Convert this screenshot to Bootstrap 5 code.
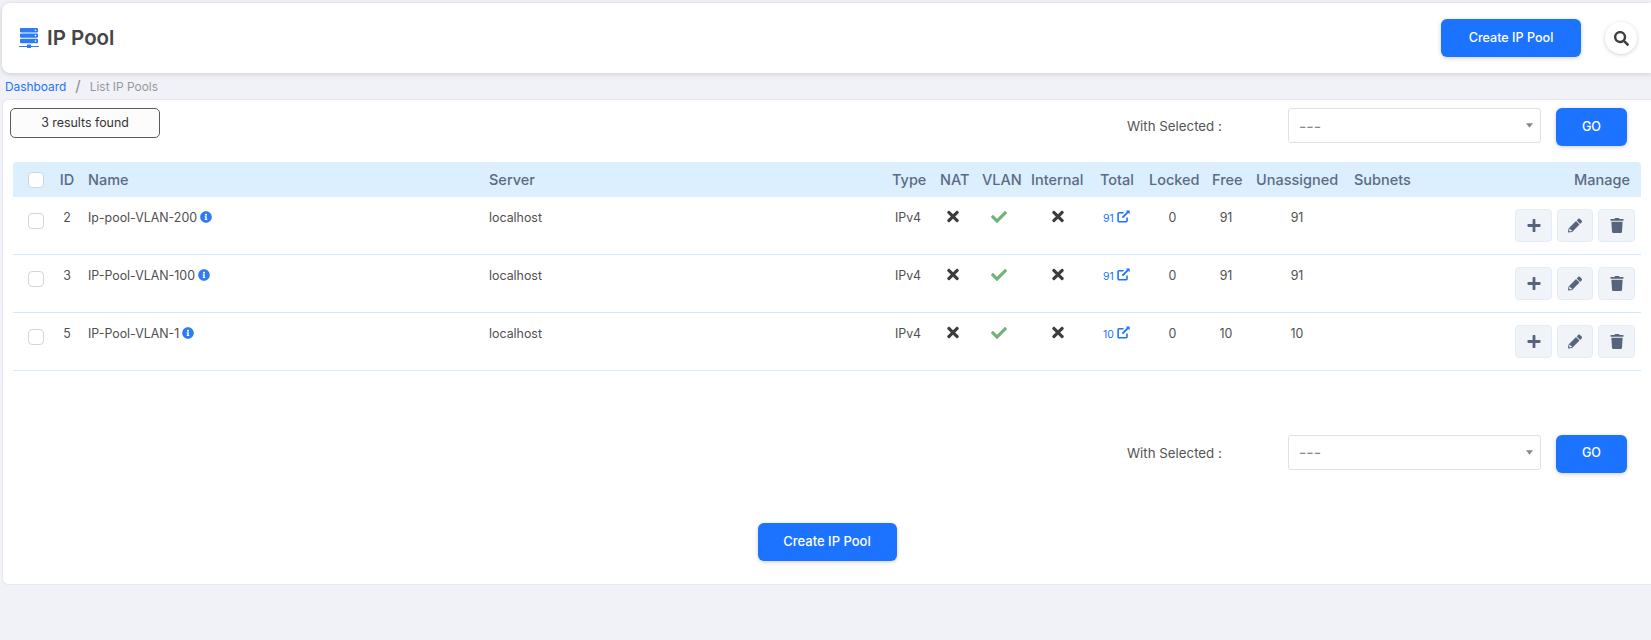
<!DOCTYPE html>
<html lang="en">
<head>
    <meta charset="UTF-8">
    <meta name="viewport" content="width=device-width, initial-scale=1.0">
    <title>IP Pool</title>
    <link href="https://cdn.jsdelivr.net/npm/bootstrap@5.3.3/dist/css/bootstrap.min.css" rel="stylesheet">
    <style>
        body { background: #f0f2f7; font-family: Inter, "Liberation Sans", sans-serif; font-size: 13px; color: #505050; padding: 3px 0 0 2px; overflow-x: hidden; }
        .page-head { height: 70px; background: #fff; border-radius: 8px 0 0 8px; box-shadow: 0 1px 5px rgba(0,0,0,.16); padding: 0 14px 0 17px; }
        .page-head h1 { font-size: 20.5px; font-weight: 600; color: #454545; margin: 0 0 0 8px; }
        .head-icon { width: 20px; height: 20px; }
        .btn-pool { background: #1c73ff; border: 0; color: #fff; border-radius: 6px; font-size: 12.6px; font-weight: 500; height: 38px; box-shadow: 0 1px 4px rgba(0,0,0,.2); display: flex; align-items: center; justify-content: center; padding: 0; }
        .btn-pool:hover { background: #1c73ff; color: #fff; }
        .btn-create { width: 140px; }
        .btn-go { width: 71px; }
        .search-btn { width: 32px; height: 32px; border-radius: 50%; background: #fff; border: 0; box-shadow: 0 1px 4px rgba(0,0,0,.18); margin-left: 24px; padding: 0; display: flex; align-items: center; justify-content: center; }
        .search-btn svg { width: 15px; height: 15px; fill: #3f3f3f; }
        .crumbs { height: 26px; margin: 0 0 0 3px; padding-top: 2px; font-size: 11.9px; align-items: center; --bs-breadcrumb-divider-color: #888; --bs-breadcrumb-item-padding-x: 9px; }
        .crumbs a { color: #1c73ff; text-decoration: none; }
        .crumbs .active { color: #999; }
        .crumbs .breadcrumb-item + .breadcrumb-item::before { font-size: 15px; line-height: 1; }
        .main-card { background: #fff; border: 1px solid #e6e8ee; border-right: 0; border-radius: 6px 0 0 6px; height: 486px; padding: 8px 9px 0 7px; }
        .count-box { width: 150px; height: 30px; border: 1px solid #5a5a5a; border-radius: 5px; background: #fcfcfc; color: #333; font-size: 12.4px; }
        .sel-label { width: 161px; color: #555; font-size: 13.3px; }
        .sel-box { width: 253px; height: 35px; margin-right: 15px; border: 1px solid #dfe1e6; border-radius: 3px; font-size: 16px; color: #888; padding: 0 24px 0 10px; font-family: inherit; background-size: 7px 5px; background-position: right 7px center; background-repeat: no-repeat; background-image: url("data:image/svg+xml,%3Csvg xmlns='http://www.w3.org/2000/svg' viewBox='0 0 9 6'%3E%3Cpath fill='%23888' d='M0 0h9L4.5 6z'/%3E%3C/svg%3E"); }
        .tool-row { margin-right: 15px; }
        .pool-table { table-layout: fixed; width: 1628px; margin: 16px 0 0 3px; font-size: 12.4px; color: #505050; }
        .pool-table thead th { background: #dcefff; color: #5b6b82; font-weight: 500; font-size: 14.5px; height: 35px; padding: 0 8px; vertical-align: middle; border: 0; white-space: nowrap; }
        .pool-table thead th:first-child { border-radius: 4px 0 0 0; }
        .pool-table thead th:last-child { border-radius: 0 4px 0 0; }
        .pool-table tbody td { height: 58px; padding: 12px 8px 0; vertical-align: top; border-bottom: 1px solid #d0e9ff; color: #505050; white-space: nowrap; background: transparent; }
        .pool-table tbody tr:first-child td { height: 57px; }
        .cw-check { width: 39px; } .cw-id { width: 28px; } .cw-name { width: 401px; } .cw-server { width: 403px; }
        .cw-type { width: 48px; } .cw-nat { width: 42px; } .cw-vlan { width: 49px; } .cw-int { width: 69px; }
        .cw-total { width: 49px; } .cw-lock { width: 63px; } .cw-free { width: 44px; } .cw-unas { width: 98px; }
        .cw-sub { width: 73px; } .cw-manage { width: 222px; }
        .pool-table .form-check-input { width: 16px; height: 16px; margin: 0 0 0 7px; border: 1px solid #d4d4d4; border-radius: 4px; float: none; display: block; }
        .pool-table td .form-check-input { margin-top: 4px; }
        .pool-table .id-cell { padding-left: 2px; padding-right: 0; text-align: center; }
        .pool-table thead .manage-head { padding-right: 11px; }
        .pool-table tbody .act-cell { padding: 12px 6px 0 0; }
        .info-ico { width: 12px; height: 12px; fill: #2f7bf0; margin-left: 3px; vertical-align: -1px; }
        .x-ico { width: 12px; height: 17px; fill: #3c3c3c; display: block; margin: -1px auto 0; }
        .ok-ico { width: 16px; height: 16px; fill: #74b27b; display: block; margin: 0 auto; }
        .total-link { color: #1c73ff; text-decoration: none; font-size: 10.5px; }
        .ext-ico { width: 13px; height: 13px; margin-left: 3px; vertical-align: -1px; fill: none; stroke: #1c73ff; stroke-width: 1.7; }
        .act-btn { height: 33px; background: #f0f4f9; border: 1px solid #e3edf8; border-radius: 4px; padding: 0; display: flex; align-items: center; justify-content: center; }
        .act-add { width: 37px; } .act-edit { width: 36px; } .act-del { width: 37px; }
        .act-btn svg { width: 14px; height: 15px; fill: #56657c; }
        .act-gap { gap: 5px; }
        .bulk-low { margin-top: 64px; }
        .bottom-btn { margin: 50px 0 0 2px; width: 139px; font-size: 13px; }
    </style>
</head>
<body>

<svg width="0" height="0" class="position-absolute">
    <symbol id="i-x" viewBox="0 0 352 512"><path d="M242.72 256l100.07-100.07c12.28-12.28 12.28-32.19 0-44.48l-22.24-22.24c-12.28-12.28-32.19-12.28-44.48 0L176 189.28 75.93 89.21c-12.28-12.28-32.19-12.28-44.48 0L9.21 111.45c-12.28 12.28-12.28 32.19 0 44.48L109.28 256 9.21 356.07c-12.28 12.28-12.28 32.19 0 44.48l22.24 22.24c12.28 12.28 32.2 12.28 44.48 0L176 322.72l100.07 100.07c12.28 12.28 32.2 12.28 44.48 0l22.24-22.24c12.28-12.28 12.28-32.19 0-44.48L242.72 256z"/></symbol>
    <symbol id="i-ok" viewBox="0 0 512 512"><path d="M173.898 439.404l-166.4-166.4c-9.997-9.997-9.997-26.206 0-36.204l36.203-36.204c9.997-9.998 26.207-9.998 36.204 0L192 312.69 432.095 72.596c9.997-9.997 26.207-9.997 36.204 0l36.203 36.204c9.997 9.997 9.997 26.206 0 36.204l-294.4 294.401c-9.998 9.997-26.207 9.997-36.204-.001z"/></symbol>
    <symbol id="i-info" viewBox="0 0 512 512"><path d="M256 8C119 8 8 119.083 8 256c0 136.997 111 248 248 248s248-111.003 248-248C504 119.083 393 8 256 8zm0 110c23.196 0 42 18.804 42 42s-18.804 42-42 42-42-18.804-42-42 18.804-42 42-42zm56 254c0 6.627-5.373 12-12 12h-88c-6.627 0-12-5.373-12-12v-24c0-6.627 5.373-12 12-12h12v-64h-12c-6.627 0-12-5.373-12-12v-24c0-6.627 5.373-12 12-12h64c6.627 0 12 5.373 12 12v100h12c6.627 0 12 5.373 12 12v24z"/></symbol>
    <symbol id="i-ext" viewBox="0 0 14 14"><path d="M10.8 8v3.6a1 1 0 0 1-1 1H2.2a1 1 0 0 1-1-1V4a1 1 0 0 1 1-1H7"/><path d="M5.8 8.2L12 2" stroke-width="2"/><path d="M9.5 .5H13.6V4.6z" fill="#1c73ff" stroke="none"/></symbol>
    <symbol id="i-plus" viewBox="0 0 448 512"><path d="M416 208H272V64c0-17.67-14.33-32-32-32h-32c-17.67 0-32 14.33-32 32v144H32c-17.67 0-32 14.33-32 32v32c0 17.67 14.33 32 32 32h144v144c0 17.67 14.33 32 32 32h32c17.67 0 32-14.33 32-32V304h144c17.67 0 32-14.33 32-32v-32c0-17.67-14.33-32-32-32z"/></symbol>
    <symbol id="i-pen" viewBox="0 0 512 512"><path d="M497.9 142.1l-46.1 46.1c-4.7 4.7-12.3 4.7-17 0l-111-111c-4.7-4.7-4.7-12.3 0-17l46.1-46.1c18.7-18.7 49.1-18.7 67.9 0l60.1 60.1c18.8 18.7 18.8 49.1 0 67.9zM284.2 99.8L21.6 362.4.4 483.9c-2.9 16.4 11.4 30.6 27.8 27.8l121.5-21.3 262.6-262.6c4.7-4.7 4.7-12.3 0-17l-111-111c-4.8-4.7-12.4-4.7-17.1 0zM88 424h48v36.3l-64.5 11.3-31.1-31.1L51.7 376H88v48z"/></symbol>
    <symbol id="i-trash" viewBox="0 0 448 512"><path d="M432 32H312l-9.4-18.7A24 24 0 0 0 281.1 0H166.8a23.72 23.72 0 0 0-21.4 13.3L136 32H16A16 16 0 0 0 0 48v32a16 16 0 0 0 16 16h416a16 16 0 0 0 16-16V48a16 16 0 0 0-16-16zM53.2 467a48 48 0 0 0 47.9 45h245.8a48 48 0 0 0 47.9-45L416 128H32z"/></symbol>
</svg>

<!-- Page header -->
<div class="page-head d-flex align-items-center">
    <svg class="head-icon" viewBox="0 0 20 20">
        <g fill="#2f7bf0">
            <rect x="1" y="0" width="18" height="4.4" rx="1"/>
            <rect x="1" y="5.4" width="18" height="4.4" rx="1"/>
            <rect x="1" y="10.8" width="18" height="4.4" rx="1"/>
            <rect x="0" y="18" width="20" height="1"/>
            <rect x="8" y="16.5" width="4" height="3.5" rx=".5"/>
        </g>
        <g fill="#fff">
            <circle cx="16.5" cy="2.2" r=".8"/>
            <circle cx="16.5" cy="7.6" r=".8"/>
            <circle cx="16.5" cy="13" r=".8"/>
        </g>
    </svg>
    <h1>IP Pool</h1>
    <a href="#" class="btn btn-pool btn-create ms-auto">Create IP Pool</a>
    <button class="search-btn" type="button" aria-label="Search">
        <svg viewBox="0 0 512 512"><path d="M505 442.7L405.3 343c-4.5-4.5-10.6-7-17-7H372c27.6-35.3 44-79.7 44-128C416 93.1 322.9 0 208 0S0 93.1 0 208s93.1 208 208 208c48.3 0 92.7-16.4 128-44v16.3c0 6.4 2.5 12.5 7 17l99.7 99.7c9.4 9.4 24.6 9.4 33.9 0l28.3-28.3c9.4-9.4 9.4-24.6.1-34zM208 336c-70.7 0-128-57.2-128-128 0-70.7 57.2-128 128-128 70.7 0 128 57.2 128 128 0 70.7-57.2 128-128 128z"/></svg>
    </button>
</div>

<!-- Breadcrumb -->
<nav aria-label="breadcrumb">
    <ol class="breadcrumb crumbs mb-0">
        <li class="breadcrumb-item"><a href="#">Dashboard</a></li>
        <li class="breadcrumb-item active" aria-current="page">List IP Pools</li>
    </ol>
</nav>

<div class="main-card">
    <!-- Top bulk actions -->
    <div class="d-flex align-items-start tool-row">
        <div class="count-box d-flex align-items-center justify-content-center">3 results found</div>
        <div class="sel-label ms-auto align-self-center">With Selected :</div>
        <select class="form-select sel-box"><option>---</option></select>
        <button class="btn btn-pool btn-go" type="button">GO</button>
    </div>

    <table class="table pool-table mb-0">
        <colgroup>
            <col class="cw-check"><col class="cw-id"><col class="cw-name"><col class="cw-server">
            <col class="cw-type"><col class="cw-nat"><col class="cw-vlan"><col class="cw-int">
            <col class="cw-total"><col class="cw-lock"><col class="cw-free"><col class="cw-unas">
            <col class="cw-sub"><col class="cw-manage">
        </colgroup>
        <thead>
            <tr>
                <th><input class="form-check-input" type="checkbox" aria-label="Select all"></th>
                <th class="id-cell">ID</th>
                <th>Name</th>
                <th>Server</th>
                <th>Type</th>
                <th>NAT</th>
                <th>VLAN</th>
                <th>Internal</th>
                <th>Total</th>
                <th>Locked</th>
                <th>Free</th>
                <th>Unassigned</th>
                <th>Subnets</th>
                <th class="text-end manage-head">Manage</th>
            </tr>
        </thead>
        <tbody id="poolRows"></tbody>
    </table>

    <!-- Bottom bulk actions -->
    <div class="d-flex align-items-start tool-row bulk-low">
        <div class="sel-label ms-auto align-self-center">With Selected :</div>
        <select class="form-select sel-box"><option>---</option></select>
        <button class="btn btn-pool btn-go" type="button">GO</button>
    </div>

    <div class="d-flex justify-content-center">
        <a href="#" class="btn btn-pool bottom-btn">Create IP Pool</a>
    </div>
</div>

<script src="https://cdn.jsdelivr.net/npm/bootstrap@5.3.3/dist/js/bootstrap.bundle.min.js"></script>
<script>
    // Fill the table rows
    const pools = [
        { id: 2, name: 'Ip-pool-VLAN-200', total: 91 },
        { id: 3, name: 'IP-Pool-VLAN-100', total: 91 },
        { id: 5, name: 'IP-Pool-VLAN-1', total: 10 }
    ];
    const xIcon = '<svg class="x-ico"><use href="#i-x"/></svg>';
    const okIcon = '<svg class="ok-ico"><use href="#i-ok"/></svg>';

    document.getElementById('poolRows').innerHTML = pools.map(pool => `
        <tr>
            <td><input class="form-check-input" type="checkbox" aria-label="Select"></td>
            <td class="id-cell">${pool.id}</td>
            <td>${pool.name}<svg class="info-ico"><use href="#i-info"/></svg></td>
            <td>localhost</td>
            <td class="text-center">IPv4</td>
            <td class="text-center">${xIcon}</td>
            <td class="text-center">${okIcon}</td>
            <td class="text-center">${xIcon}</td>
            <td class="text-center"><a class="total-link" href="#">${pool.total}<svg class="ext-ico"><use href="#i-ext"/></svg></a></td>
            <td class="text-center">0</td>
            <td class="text-center">${pool.total}</td>
            <td class="text-center">${pool.total}</td>
            <td></td>
            <td class="act-cell">
                <div class="d-flex justify-content-end act-gap">
                    <button class="act-btn act-add" type="button"><svg><use href="#i-plus"/></svg></button>
                    <button class="act-btn act-edit" type="button"><svg><use href="#i-pen"/></svg></button>
                    <button class="act-btn act-del" type="button"><svg><use href="#i-trash"/></svg></button>
                </div>
            </td>
        </tr>`).join('');
</script>
</body>
</html>
